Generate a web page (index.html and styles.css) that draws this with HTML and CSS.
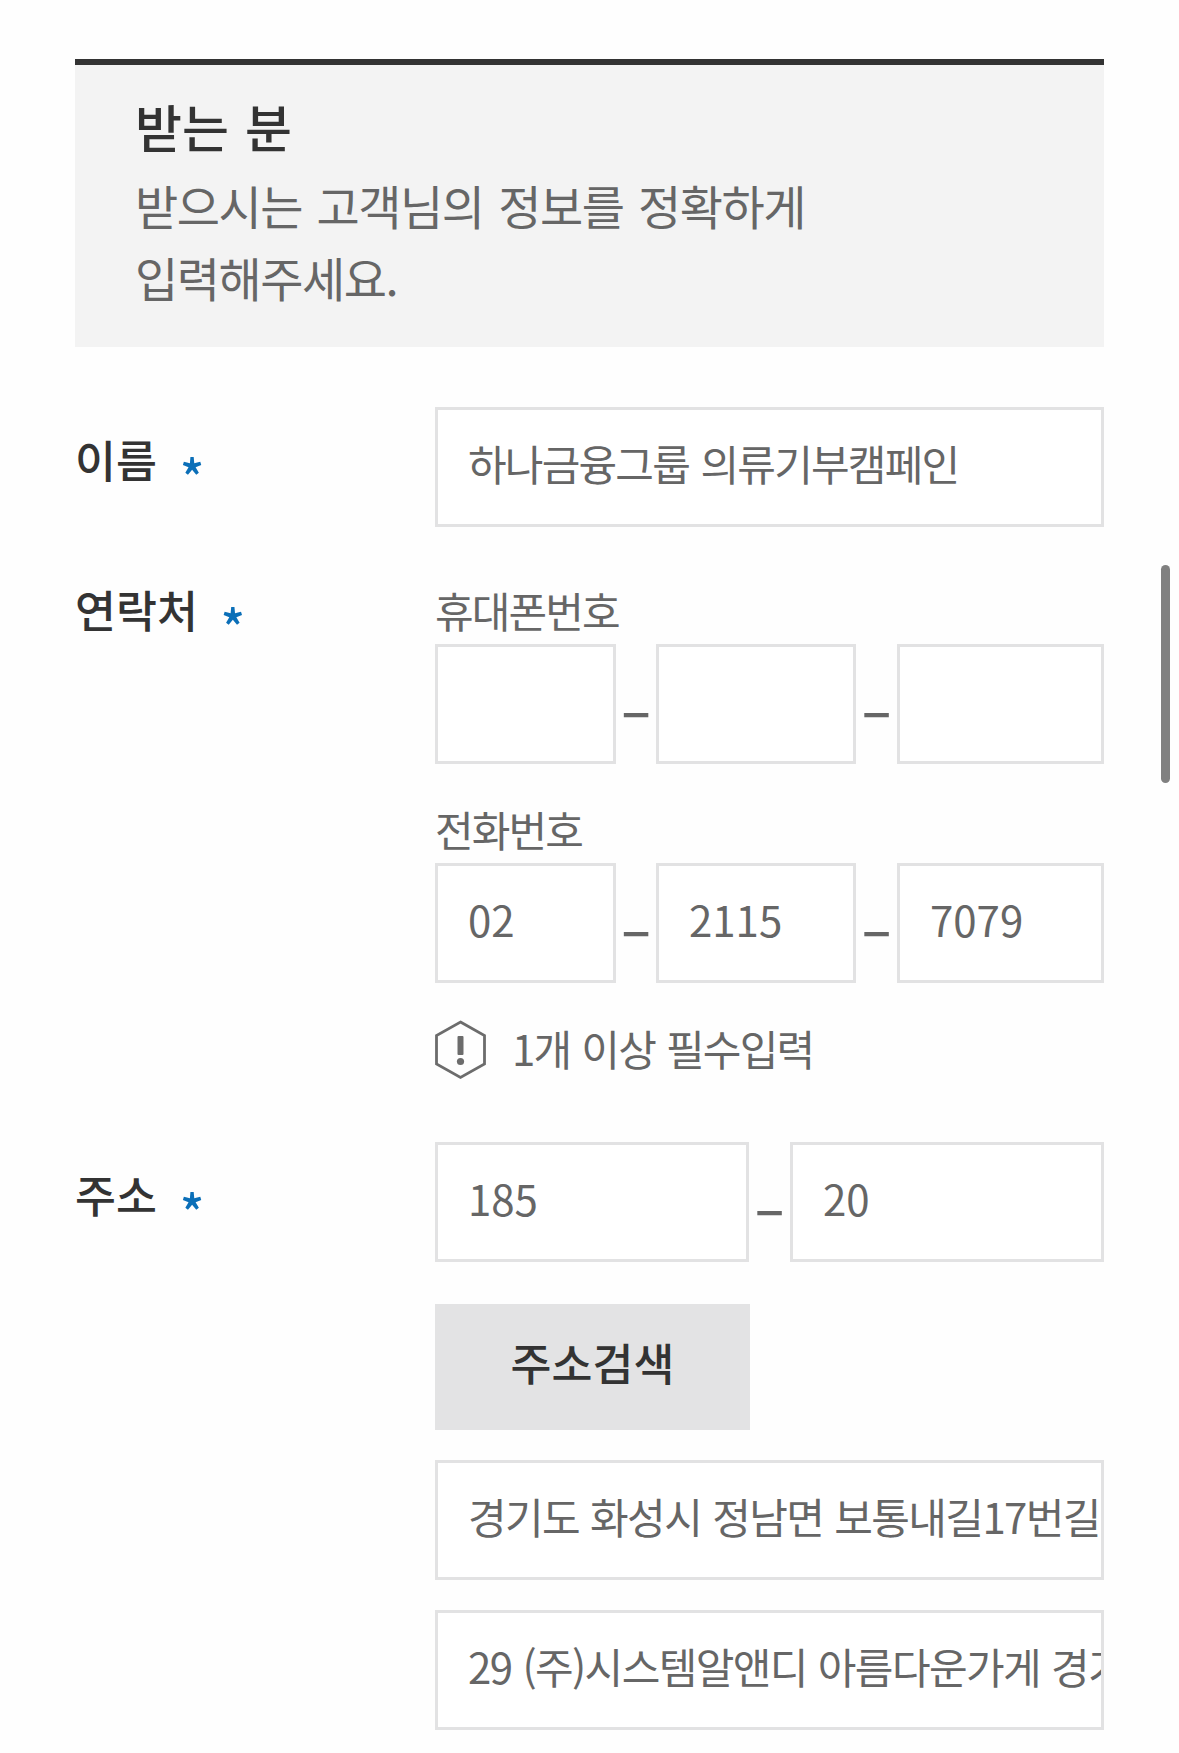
FILE: index.html
```html
<!DOCTYPE html>
<html lang="ko">
<head>
  <meta charset="UTF-8">
  <title>받는 분</title>
  <meta name="viewport" content="width=device-width, initial-scale=1.0">
  <link rel="stylesheet" href="styles.css">
</head>
<body>

  <main>
    <header class="section-head">
      <h2>받는 분</h2>
      <p>받으시는 고객님의 정보를 정확하게<br>입력해주세요.</p>
    </header>

    <form>
      <div class="row">
        <div class="label">이름<span class="required">*</span></div>
        <div class="fields">
          <input type="text" value="하나금융그룹 의류기부캠페인">
        </div>
      </div>

      <div class="row row-contact">
        <div class="label">연락처<span class="required">*</span></div>
        <div class="fields">
          <div class="sub-label">휴대폰번호</div>
          <div class="phone">
            <input type="text" class="num">
            <span class="dash">–</span>
            <input type="text" class="num">
            <span class="dash">–</span>
            <input type="text" class="num">
          </div>
          <div class="sub-label second">전화번호</div>
          <div class="phone">
            <input type="text" class="num" value="02">
            <span class="dash">–</span>
            <input type="text" class="num" value="2115">
            <span class="dash">–</span>
            <input type="text" class="num" value="7079">
          </div>
          <div class="hint">
            <svg width="51" height="60" viewBox="0 0 51 60">
              <path d="M25.5 2 L49.5 15.5 V44 L25.5 57.5 L1.5 44 V15.5 Z" fill="none" stroke="#6c6c6c" stroke-width="2.8"/>
              <rect x="22.5" y="16" width="6" height="19" rx="1" fill="#6c6c6c"/>
              <circle cx="25.5" cy="41.5" r="3.6" fill="#6c6c6c"/>
            </svg>
            <span>1개 이상 필수입력</span>
          </div>
        </div>
      </div>

      <div class="row row-address">
        <div class="label">주소<span class="required">*</span></div>
        <div class="fields">
          <div class="zip">
            <input type="text" class="num" value="185">
            <span class="dash">–</span>
            <input type="text" class="num" value="20">
          </div>
          <button type="button" class="search-btn">주소검색</button>
          <input type="text" class="addr" value="경기도 화성시 정남면 보통내길17번길">
          <input type="text" class="addr" value="29 (주)시스템알앤디 아름다운가게 경기">
        </div>
      </div>
    </form>
  </main>

  <div class="scroll-thumb"></div>

</body>
</html>
```
FILE: styles.css
```css
* {
  box-sizing: border-box;
}

body {
  margin: 0;
  height: 1753px;
  overflow: hidden;
  background-color: #fefefe;
  color: #666;
  font-family: "Noto Sans CJK KR", sans-serif;
}

main {
  padding: 59px 75px 0;
}

.section-head {
  height: 288px;
  padding: 25px 60px 0;
  border-top: 6px solid #333;
  background-color: #f3f3f3;
}

h2 {
  margin: 0;
  font-size: 51px;
  font-weight: 500;
  line-height: 72px;
  word-spacing: 2px;
  color: #333;
}

.section-head p {
  margin: 7px 0 0;
  font-size: 47px;
  line-height: 72px;
  letter-spacing: -1.5px;
  word-spacing: 3px;
}

.row {
  display: grid;
  grid-template-columns: 360px 1fr;
  margin-top: 60px;
}

.label {
  padding-top: 19px;
  font-size: 44.5px;
  font-weight: 500;
  line-height: 66px;
  color: #333;
}

.required {
  display: inline-block;
  margin-left: 23px;
  font-size: 50px;
  line-height: 40px;
  vertical-align: -19px;
  color: #0b6fb8;
}

input {
  display: block;
  width: 100%;
  min-width: 0;
  height: 120px;
  margin: 0;
  padding: 0 0 9px 30px;
  border: 3px solid #e2e2e3;
  border-radius: 0;
  background-color: #fff;
  color: #666;
  font-family: inherit;
  font-size: 42px;
  letter-spacing: -1.8px;
  word-spacing: 1.5px;
}

.num {
  letter-spacing: 0;
}

.addr {
  letter-spacing: -1.6px;
  word-spacing: 0.8px;
}

.row-contact {
  margin-top: 50px;
}

.row-contact .label {
  padding-top: 0;
  margin-top: -1px;
}

.sub-label {
  height: 67px;
  font-size: 42px;
  line-height: 65px;
  letter-spacing: -1.9px;
}

.sub-label.second {
  margin-top: 32px;
}

.phone {
  display: grid;
  grid-template-columns: 181px 40px 200px 41px 207px;
}

.zip {
  display: grid;
  grid-template-columns: 314px 41px 314px;
}

.dash {
  padding-top: 30px;
  font-size: 55px;
  font-weight: 500;
  line-height: 66px;
  text-align: center;
}

.hint {
  display: flex;
  align-items: center;
  gap: 26px;
  height: 60px;
  margin-top: 37px;
  font-size: 42px;
  letter-spacing: -1.8px;
  word-spacing: 1px;
}

.hint span {
  padding-bottom: 5px;
}

.row-address {
  margin-top: 62px;
}

.search-btn {
  display: block;
  width: 315px;
  height: 126px;
  margin: 42px 0 30px;
  padding: 0 0 11px;
  border: none;
  background-color: #e3e3e4;
  color: #333;
  font-family: inherit;
  font-size: 44.5px;
  font-weight: 500;
}

.addr + .addr {
  margin-top: 30px;
}

.scroll-thumb {
  position: absolute;
  top: 565px;
  right: 9px;
  width: 9px;
  height: 218px;
  border-radius: 5px;
  background-color: #808080;
}
```
